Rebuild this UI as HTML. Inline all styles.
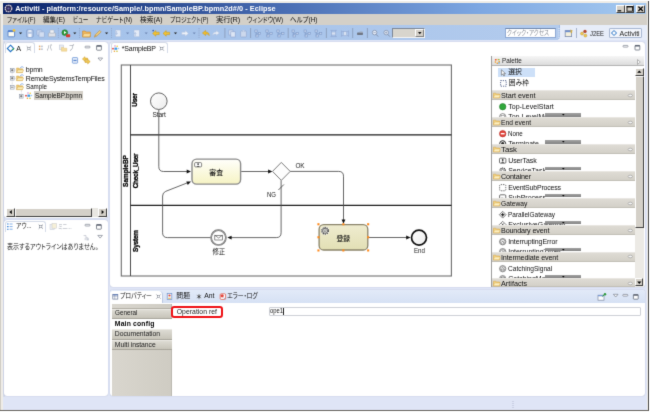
<!DOCTYPE html>
<html lang="ja">
<head>
<meta charset="utf-8">
<title>Activiti - Eclipse</title>
<style>
html,body{margin:0;padding:0;background:#fff}
body{width:650px;height:413px;overflow:hidden;font-family:"Liberation Sans","Noto Sans CJK JP",sans-serif}
#win{position:relative;width:650px;height:413px;overflow:hidden;background:#fff;filter:url(#soft)}
#win div{position:absolute;box-sizing:border-box}
.t{position:absolute;white-space:nowrap;font-feature-settings:"palt"}
svg{position:absolute;overflow:visible}
.panel{background:#fff;border-radius:3px;box-shadow:0 0 1px rgba(120,130,170,.7)}
.drawer{background:linear-gradient(#dedbd4,#d3d0c8);border-top:1px solid #e9e7e2;border-bottom:1px solid #c2bfb6}
.bar{background:linear-gradient(#a2a2a2,#828282)}
.btn3d{background:#d4d0c8;border:1px solid;border-color:#fff #404040 #404040 #fff}

</style>
</head>
<body>
<svg width="0" height="0" style="position:absolute"><defs><filter id="soft" x="0" y="0" width="100%" height="100%" color-interpolation-filters="sRGB"><feConvolveMatrix order="3" kernelMatrix="0.0113 0.0838 0.0113 0.0838 0.6193 0.0838 0.0113 0.0838 0.0113" edgeMode="duplicate" preserveAlpha="true"/></filter></defs></svg>
<div id="win">
<div style="left:0px;top:0.8px;width:648.7px;height:410.4px;background:#efede8;border-right:1.3px solid #4a4a4a;border-bottom:1.2px solid #6a6660"></div>
<div style="left:0px;top:14px;width:1.3px;height:396px;background:#d0ccc4"></div>
<div style="left:2.9px;top:2.9px;width:644.5px;height:407.1px;background:#d4d0c8"></div>
<div style="left:3px;top:3px;width:643px;height:11px;background:linear-gradient(to right,#0a246a 0%,#4a6eb4 44%,#7da7e2 74%,#a6caf0 100%)"></div>
<svg style="left:4px;top:4px" width="9" height="9" viewBox="0 0 9 9"><circle cx="4.5" cy="4.5" r="4.300" fill="#2a2858"/><circle cx="4.500" cy="4.500" r="3.300" fill="none" stroke="#e6e6ee" stroke-width="1.100" stroke-dasharray="1.600 0.500"/><circle cx="4.500" cy="4.500" r="2.400" fill="#34305a"/><circle cx="4.500" cy="4.500" r="1.100" fill="#6a62a8"/></svg>
<span class="t" id="t0" style="left:15.2px;top:3.0px;font-size:7.3px;line-height:11.3px;color:#fff;font-weight:bold;letter-spacing:0.05px;">Activiti - platform:/resource/Sample/.bpmn/SampleBP.bpmn2d#/0 - Eclipse</span>
<div class="btn3d" style="left:615.5px;top:4.5px;width:9px;height:8px;"></div>
<div class="btn3d" style="left:624.5px;top:4.5px;width:9.5px;height:8px;"></div>
<div class="btn3d" style="left:636px;top:4.5px;width:9px;height:8px;"></div>
<svg style="left:615px;top:4px" width="32" height="10" viewBox="0 0 32 10"><rect x="2.6" y="6.2" width="3.6" height="1.2" fill="#000"/><rect x="12" y="2.4" width="5.4" height="4.8" fill="none" stroke="#000" stroke-width="0.8"/><rect x="11.8" y="2.2" width="5.8" height="1.2" fill="#000"/><path d="M23.4 2.6l4.4 4.4M27.8 2.6l-4.4 4.4" stroke="#000" stroke-width="1.3"/></svg>
<span class="t" id="t1" style="left:6.6px;top:13.9px;font-size:7.4px;line-height:11.4px;color:#111;letter-spacing:0.00px;transform-origin:0 50%;transform:scaleX(0.811);">ファイル(F)</span>
<span class="t" id="t2" style="left:43px;top:13.9px;font-size:7.4px;line-height:11.4px;color:#111;letter-spacing:0.00px;transform-origin:0 50%;transform:scaleX(0.893);">編集(E)</span>
<span class="t" id="t3" style="left:72.8px;top:13.9px;font-size:7.4px;line-height:11.4px;color:#111;letter-spacing:0.00px;transform-origin:0 50%;transform:scaleX(0.758);">ビュー</span>
<span class="t" id="t4" style="left:95.5px;top:13.9px;font-size:7.4px;line-height:11.4px;color:#111;letter-spacing:0.00px;transform-origin:0 50%;transform:scaleX(0.814);">ナビゲート(N)</span>
<span class="t" id="t5" style="left:140px;top:13.9px;font-size:7.4px;line-height:11.4px;color:#111;letter-spacing:0.00px;transform-origin:0 50%;transform:scaleX(0.913);">検索(A)</span>
<span class="t" id="t6" style="left:170px;top:13.9px;font-size:7.4px;line-height:11.4px;color:#111;letter-spacing:0.00px;transform-origin:0 50%;transform:scaleX(0.778);">プロジェクト(P)</span>
<span class="t" id="t7" style="left:216px;top:13.9px;font-size:7.4px;line-height:11.4px;color:#111;letter-spacing:-0.21px;">実行(R)</span>
<span class="t" id="t8" style="left:247px;top:13.9px;font-size:7.4px;line-height:11.4px;color:#111;letter-spacing:0.00px;transform-origin:0 50%;transform:scaleX(0.831);">ウィンドウ(W)</span>
<span class="t" id="t9" style="left:289.5px;top:13.9px;font-size:7.4px;line-height:11.4px;color:#111;letter-spacing:0.00px;transform-origin:0 50%;transform:scaleX(0.874);">ヘルプ(H)</span>
<div style="left:2.9px;top:25px;width:644.5px;height:15.4px;background:#e7edf9"></div>
<div style="left:2.9px;top:25px;width:557.3px;height:15.4px;background:linear-gradient(to right,#a4c2ea 0%,#a9c5eb 50%,#b3cbed 100%);border-right:1px solid #9db9e2;border-radius:0 0 4px 0"></div>
<svg style="left:0;top:25px" width="650" height="16" viewBox="0 25 650 16"><rect x="8" y="30.6" width="6.6" height="6.2" rx="0.8" fill="#fdfdf4" stroke="#5c83c4" stroke-width="0.9"/><rect x="8" y="30.4" width="6.6" height="1.7" fill="#4f7fd0"/><circle cx="14" cy="30.4" r="1.4" fill="#f2c43c"/><path d="M19 32.4h3.2l-1.6 1.9z" fill="#222"/><rect x="26.6" y="30" width="6.6" height="7" rx="0.6" fill="#b4c7e6" stroke="#7f9ac8" stroke-width="0.8"/><rect x="28.3" y="33.8" width="3.2" height="3.2" fill="#f3f6fb"/><rect x="28.3" y="30" width="3.2" height="2" fill="#e2eaf6"/><rect x="36.8" y="30" width="5" height="5.2" rx="0.6" fill="#c9d7ee" stroke="#93abd2" stroke-width="0.7"/><rect x="39" y="31.8" width="5.4" height="5.4" rx="0.6" fill="#d3def1" stroke="#93abd2" stroke-width="0.7"/><rect x="48.4" y="32.8" width="7.2" height="4" rx="0.9" fill="#e0e2e8" stroke="#a3aebf" stroke-width="0.7"/><rect x="50" y="30" width="4" height="3" fill="#f0f1f5" stroke="#a9b3c4" stroke-width="0.5"/><path d="M58.4 28v10" stroke="#8ea3c6" stroke-width="0.9" stroke-dasharray="0.9 0.9"/><circle cx="64.8" cy="32.6" r="2.9" fill="#2e9b3a" stroke="#1f6e2a" stroke-width="0.5"/><path d="M64 31.1l2.4 1.5-2.4 1.5z" fill="#fff"/><rect x="66" y="34.2" width="4.2" height="3" rx="0.8" fill="#d83a2e"/><path d="M73.2 32.4h3.2l-1.6 1.9z" fill="#222"/><path d="M79.5 28v10" stroke="#8ea3c6" stroke-width="0.9" stroke-dasharray="0.9 0.9"/><path d="M82.6 31h2.6l.9 1h4.2v5h-7.7z" fill="#f0b65a" stroke="#c98a2e" stroke-width="0.6"/><path d="M83.8 33.6h7l-1.2 3.2h-7z" fill="#f9dc98" stroke="#c98a2e" stroke-width="0.4"/><path d="M94.2 37.2l1.1-2.6 4.4-4.2 1.5 1.5-4.4 4.2z" fill="#ecc878" stroke="#b08a48" stroke-width="0.5"/><path d="M94.2 37.2l1.1-2.6 1.5 1.5z" fill="#c8a060"/><path d="M105 32.4h3.2l-1.6 1.9z" fill="#222"/><path d="M111.5 28v10" stroke="#8ea3c6" stroke-width="0.9" stroke-dasharray="0.9 0.9"/><rect x="115.4" y="30" width="5.4" height="6.8" fill="#e4ebf7" stroke="#a9bcdc" stroke-width="0.5"/><path d="M116.6 31v3.4M116.6 34.4l-1-1.2M116.6 34.4l1-1.2" stroke="#9ab0d6" stroke-width="0.6"/><path d="M126 32.4h3.2l-1.6 1.9z" fill="#6f87b3"/><rect x="134" y="30" width="5.4" height="6.8" fill="#e4ebf7" stroke="#a9bcdc" stroke-width="0.5"/><path d="M135.2 36v-3.4M135.2 32.6l-1 1.2M135.2 32.6l1 1.2" stroke="#9ab0d6" stroke-width="0.6"/><path d="M144.6 32.4h3.2l-1.6 1.9z" fill="#6f87b3"/><path d="M152.6 33.4l3.2-2.8v1.6h3.4v2.4h-3.4v1.6z" fill="#f2c230" stroke="#c6961a" stroke-width="0.5"/><circle cx="153.2" cy="30.6" r="0.9" fill="#3a62b8"/><path d="M163 33.4l3.2-2.8v1.6h3.4v2.4h-3.4v1.6z" fill="#f2c230" stroke="#c6961a" stroke-width="0.5"/><path d="M173.9 32.4h3.2l-1.6 1.9z" fill="#222"/><path d="M188.4 33.4l-3.2-2.8v1.6h-3.4v2.4h3.4v1.6z" fill="#eef2f9" stroke="#b4c3de" stroke-width="0.5"/><path d="M192.6 32.4h3.2l-1.6 1.9z" fill="#7189b5"/><path d="M199 28v10" stroke="#8ea3c6" stroke-width="0.9" stroke-dasharray="0.9 0.9"/><path d="M202.4 33l3.2-2.6v1.6c2.6 0 3.6 1.2 3.6 3.6-1-1.3-1.8-1.6-3.6-1.5v1.5z" fill="#f0bd2c" stroke="#c6961a" stroke-width="0.5"/><path d="M219.4 33l-3.2-2.6v1.6c-2.6 0-3.6 1.2-3.6 3.6 1-1.3 1.8-1.6 3.6-1.5v1.5z" fill="#e6ecf7" stroke="#b0c0dc" stroke-width="0.5"/><path d="M224.9 28v10" stroke="#8898b4" stroke-width="0.8"/><rect x="228.8" y="30" width="4.2" height="5" fill="#d3deef" stroke="#8fa6cf" stroke-width="0.6"/><rect x="230.8" y="31.8" width="4.4" height="5.2" fill="#dde6f4" stroke="#8fa6cf" stroke-width="0.6"/><rect x="240.6" y="31" width="5.8" height="6" rx="0.6" fill="#ccd8ec" stroke="#8fa6cf" stroke-width="0.6"/><rect x="242.2" y="30.2" width="2.6" height="1.6" fill="#e3eaf6" stroke="#a3b7da" stroke-width="0.4"/><path d="M250.6 28v10" stroke="#8898b4" stroke-width="0.8"/><rect x="254.8" y="30" width="2.4" height="2.2" fill="#c0d0ea" stroke="#7f9ac8" stroke-width="0.6"/><rect x="258.2" y="32.4" width="2.4" height="2.2" fill="#c0d0ea" stroke="#7f9ac8" stroke-width="0.6"/><rect x="255.8" y="34.8" width="2.4" height="2.2" fill="#c0d0ea" stroke="#7f9ac8" stroke-width="0.6"/><path d="M256.0 32.2v3.6M256.0 33.5h2.4" stroke="#7f9ac8" stroke-width="0.6" fill="none"/><rect x="265.8" y="30" width="2.4" height="2.2" fill="#c0d0ea" stroke="#7f9ac8" stroke-width="0.6"/><rect x="269.8" y="32.4" width="2.4" height="2.2" fill="#c0d0ea" stroke="#7f9ac8" stroke-width="0.6"/><rect x="266.8" y="34.8" width="2.4" height="2.2" fill="#c0d0ea" stroke="#7f9ac8" stroke-width="0.6"/><path d="M267.0 32.2v3.6M267.0 33.5h2.9999999999999996" stroke="#7f9ac8" stroke-width="0.6" fill="none"/><rect x="276.8" y="30" width="2.4" height="2.2" fill="#c0d0ea" stroke="#7f9ac8" stroke-width="0.6"/><rect x="281.59999999999997" y="32.4" width="2.4" height="2.2" fill="#c0d0ea" stroke="#7f9ac8" stroke-width="0.6"/><rect x="277.8" y="34.8" width="2.4" height="2.2" fill="#c0d0ea" stroke="#7f9ac8" stroke-width="0.6"/><path d="M278.0 32.2v3.6M278.0 33.5h3.8000000000000003" stroke="#7f9ac8" stroke-width="0.6" fill="none"/><path d="M288.2 28v10" stroke="#8898b4" stroke-width="0.8"/><rect x="292" y="30" width="2.4" height="2.2" fill="#c0d0ea" stroke="#7f9ac8" stroke-width="0.6"/><rect x="296.0" y="32.4" width="2.4" height="2.2" fill="#c0d0ea" stroke="#7f9ac8" stroke-width="0.6"/><rect x="293" y="34.8" width="2.4" height="2.2" fill="#c0d0ea" stroke="#7f9ac8" stroke-width="0.6"/><path d="M293.2 32.2v3.6M293.2 33.5h2.9999999999999996" stroke="#7f9ac8" stroke-width="0.6" fill="none"/><rect x="304" y="30" width="2.4" height="2.2" fill="#c0d0ea" stroke="#7f9ac8" stroke-width="0.6"/><rect x="308.0" y="32.4" width="2.4" height="2.2" fill="#c0d0ea" stroke="#7f9ac8" stroke-width="0.6"/><rect x="305" y="34.8" width="2.4" height="2.2" fill="#c0d0ea" stroke="#7f9ac8" stroke-width="0.6"/><path d="M305.2 32.2v3.6M305.2 33.5h2.9999999999999996" stroke="#7f9ac8" stroke-width="0.6" fill="none"/><rect x="315" y="30" width="2.4" height="2.2" fill="#c0d0ea" stroke="#7f9ac8" stroke-width="0.6"/><rect x="319.4" y="32.4" width="2.4" height="2.2" fill="#c0d0ea" stroke="#7f9ac8" stroke-width="0.6"/><rect x="316" y="34.8" width="2.4" height="2.2" fill="#c0d0ea" stroke="#7f9ac8" stroke-width="0.6"/><path d="M316.2 32.2v3.6M316.2 33.5h3.4" stroke="#7f9ac8" stroke-width="0.6" fill="none"/><path d="M326.4 28v10" stroke="#8898b4" stroke-width="0.8"/><path d="M330.4 30.4h6.4M330.4 36.6h6.4M331.6 30.4v6.2M335.6 30.4v6.2" stroke="#93abd4" stroke-width="0.7" fill="none"/><rect x="331.6" y="32" width="4" height="3" fill="#d7e1f2" stroke="#93abd4" stroke-width="0.5"/><path d="M341.4 30.4v6.4M348.6 30.4v6.4M341.4 31.6h7.2M341.4 35.6h7.2" stroke="#93abd4" stroke-width="0.7" fill="none"/><rect x="343.4" y="31.6" width="3.2" height="4" fill="#d7e1f2" stroke="#93abd4" stroke-width="0.5"/><path d="M352.7 28v10" stroke="#8898b4" stroke-width="0.8"/><rect x="357" y="32.4" width="6" height="2.6" rx="0.8" fill="#6f7684"/><rect x="359.6" y="31.6" width="3" height="1.4" fill="#9aa2b2"/><path d="M367.4 28v10" stroke="#8898b4" stroke-width="0.8"/><circle cx="374.6" cy="32.6" r="2.3" fill="#e6edf8" stroke="#8392ad" stroke-width="0.8"/><path d="M376.2 34.4l2 2.2" stroke="#8392ad" stroke-width="1"/><path d="M373.4 32.6h2.4" stroke="#8392ad" stroke-width="0.6"/><circle cx="386.2" cy="32.6" r="2.3" fill="#e6edf8" stroke="#8392ad" stroke-width="0.8"/><path d="M387.8 34.4l2 2.2" stroke="#8392ad" stroke-width="1"/><path d="M385 32.6h2.4M386.2 31.4v2.4" stroke="#8392ad" stroke-width="0.6"/></svg>
<div style="left:392px;top:28px;width:32.5px;height:10px;background:#d8d5cd;border:1px solid;border-color:#7d8796 #f4f4f4 #f4f4f4 #7d8796"></div>
<div style="left:415px;top:29px;width:8.5px;height:8px;background:#d4d0c8;border:1px solid;border-color:#fff #808080 #808080 #fff"></div>
<svg style="left:417.600px;top:32.200px" width="3.600" height="2.400" viewBox="0 0 3.600 2.400"><path d="M0 0h3.600L1.800 2.200z" fill="#111"/></svg>
<div style="left:504.5px;top:27.7px;width:51px;height:10.5px;background:#fff;border:1px solid #8fa9d4;border-top-color:#6f87ad"></div>
<span class="t" id="t10" style="left:506.6px;top:27.8px;font-size:6.8px;line-height:10.8px;color:#8a8f99;letter-spacing:0.00px;transform-origin:0 50%;transform:scaleX(0.816);">クイック・アクセス</span>
<svg style="left:557.600px;top:27.500px" width="2" height="12" viewBox="0 0 2 12"><path d="M1 0v12" stroke="#eef3fb" stroke-width="1" stroke-dasharray="1 1.200"/></svg>
<svg style="left:564px;top:29px" width="10" height="9" viewBox="0 0 10 9"><rect x="1.2" y="1.6" width="6.4" height="6" fill="#f4f0dc" stroke="#7d8cab" stroke-width="0.8"/><rect x="1.2" y="1.6" width="6.4" height="1.6" fill="#6d8fd0"/><path d="M6.6 0.4l.7 1.2 1.3.2-1 .9.3 1.3-1.3-.6" fill="#f0c030" stroke="#c7982a" stroke-width="0.3"/></svg>
<div style="left:576px;top:28px;width:1px;height:10px;background:#a7b4cc"></div>
<svg style="left:579.6px;top:29px" width="8" height="9" viewBox="0 0 8 9"><circle cx="2" cy="4.6" r="1.5" fill="#f0c850" stroke="#b58a2a" stroke-width="0.4"/><circle cx="5" cy="2.4" r="1.7" fill="#b5482e"/><circle cx="5.4" cy="6.6" r="1.5" fill="#f0c850" stroke="#b58a2a" stroke-width="0.4"/></svg>
<span class="t" id="t11" style="left:590px;top:27.8px;font-size:7px;line-height:11px;color:#222;letter-spacing:0.00px;transform-origin:0 50%;transform:scaleX(0.837);">J2EE</span>
<div style="left:608.6px;top:27.6px;width:33.6px;height:10.8px;background:#f3f6fc;border:1px solid #a9b8d3;border-radius:1px"></div>
<svg style="left:611.4px;top:30.2px" width="6" height="6" viewBox="0 0 6 6"><path d="M3 .5L5.5 3 3 5.5.5 3z" fill="#fff" stroke="#1f6fc4" stroke-width="1"/></svg>
<span class="t" id="t12" style="left:619.6px;top:27.8px;font-size:7px;line-height:11px;color:#222;letter-spacing:-0.03px;">Activiti</span>
<div style="left:2.9px;top:40.3px;width:644.5px;height:369.7px;background:#dfe5f6"></div>
<div style="left:3px;top:40.5px;width:2px;height:356px;background:#d4daea"></div>
<div class="panel" style="left:4px;top:41.8px;width:103.6px;height:176.6px;"></div>
<div style="left:4.6px;top:42.4px;width:30px;height:10.6px;background:#fff;border:1px solid #d5dbe8;border-bottom:0;border-radius:3px 3px 0 0"></div>
<svg style="left:0;top:41px" width="110" height="26" viewBox="0 41 110 26"><path d="M10.5 45.2l3.2 3.2-3.2 3.2-3.2-3.2z" fill="#fff" stroke="#1f6fc4" stroke-width="1.1"/><path d="M12.4 50l1.6-1.6" stroke="#3aa648" stroke-width="1.1"/><path d="M26.7 46.3l4.4 4.4m0-4.4l-4.4 4.4" stroke="#6c7381" stroke-width="0.55"/><rect x="27.8" y="47.4" width="2.2" height="2.2" fill="#fff" stroke="#6c7381" stroke-width="0.45"/><rect x="38.9" y="45.6" width="1.5" height="1.6" fill="#e6a868"/><rect x="38.9" y="48.4" width="1.5" height="1.6" fill="#e6a868"/><rect x="41.2" y="45.6" width="1.5" height="1.6" fill="#b4bccc"/><rect x="41.2" y="48.4" width="1.5" height="1.6" fill="#b4bccc"/><rect x="59.4" y="45" width="4.2" height="4.6" fill="#e8ecf4" stroke="#bcc4d2" stroke-width="0.5"/><path d="M61.4 47.4h2.2l.6.8h2.6v3h-5.4z" fill="#f5dc9c" stroke="#dcbc70" stroke-width="0.4"/><rect x="85" y="46.2" width="5" height="1.7" rx="0.7" fill="#fff" stroke="#666d7c" stroke-width="0.6"/><rect x="96.6" y="45.6" width="4.8" height="4.6" rx="0.6" fill="#fff" stroke="#555c6a" stroke-width="0.7"/><rect x="96.6" y="45.4" width="4.8" height="1.3" fill="#555c6a"/><rect x="72.400" y="57.600" width="5.200" height="5.600" rx="0.600" fill="#eaf1fc" stroke="#6f97d6" stroke-width="0.800"/><rect x="73.400" y="59.800" width="3.200" height="1.300" fill="#5a86cc"/><path d="M82.400 59l2.500-2.300v1.400h2.700v1.800h-2.700v1.400z" fill="#f4cc50" stroke="#c8962a" stroke-width="0.500"/><path d="M90.200 61.600l-2.500 2.300v-1.400h-2.700v-1.800h2.700v-1.400z" fill="#f4cc50" stroke="#c8962a" stroke-width="0.500"/><path d="M98 58h4.6l-2.3 2.7z" fill="#fff" stroke="#666d7c" stroke-width="0.6"/></svg>
<span class="t" id="t13" style="left:16.2px;top:43.0px;font-size:7.2px;line-height:11.2px;color:#111;letter-spacing:-0.20px;">A</span>
<span class="t" id="t14" style="left:46.6px;top:43.3px;font-size:6.6px;line-height:10.6px;color:#8b919d;letter-spacing:0.00px;transform-origin:0 50%;transform:scaleX(0.804);">パ</span>
<span class="t" id="t15" style="left:69.4px;top:43.3px;font-size:6.6px;line-height:10.6px;color:#8b919d;letter-spacing:0.00px;transform-origin:0 50%;transform:scaleX(0.823);">プ</span>
<svg style="left:11px;top:70px" width="12" height="30" viewBox="11 70 12 30"><path d="M12.2 72v16M14 70h2M14 78.3h2M14 86.8h2M21.4 90v5.4" stroke="#a8adb8" stroke-width="0.5" stroke-dasharray="0.7 0.7" fill="none"/></svg>
<svg style="left:10px;top:67.9px" width="4.4" height="4.4" viewBox="0 0 4.4 4.4"><rect x="0.3" y="0.3" width="3.8" height="3.8" fill="#fff" stroke="#8c96a8" stroke-width="0.6"/><path d="M1 2.2h2.4" stroke="#333" stroke-width="0.6"/><path d="M2.2 1v2.4" stroke="#333" stroke-width="0.6"/></svg>
<svg style="left:16px;top:65.7px" width="8" height="7.4" viewBox="0 0 8 7.4"><path d="M.6 2h2.2l.7.8h3v3.800H.6z" fill="#eecb78" stroke="#cfa044" stroke-width="0.45"/><path d="M1.900 3.900h5.800l-1.200 2.700H.6z" fill="#fbeeb8" stroke="#cfa044" stroke-width="0.4"/><path d="M4.200 2.300c.4-1.600 2.400-2 3.400-.8" fill="none" stroke="#7ea6e2" stroke-width="0.9"/></svg>
<span class="t" id="t16" style="left:25.8px;top:64.4px;font-size:7px;line-height:11px;color:#111;letter-spacing:-0.20px;">bpmn</span>
<svg style="left:10px;top:76.4px" width="4.4" height="4.4" viewBox="0 0 4.4 4.4"><rect x="0.3" y="0.3" width="3.8" height="3.8" fill="#fff" stroke="#8c96a8" stroke-width="0.6"/><path d="M1 2.2h2.4" stroke="#333" stroke-width="0.6"/><path d="M2.2 1v2.4" stroke="#333" stroke-width="0.6"/></svg>
<svg style="left:16px;top:74.2px" width="8" height="7.4" viewBox="0 0 8 7.4"><path d="M.6 2h2.2l.7.8h3v3.800H.6z" fill="#eecb78" stroke="#cfa044" stroke-width="0.45"/><path d="M1.900 3.900h5.800l-1.200 2.700H.6z" fill="#fbeeb8" stroke="#cfa044" stroke-width="0.4"/><path d="M4.200 2.300c.4-1.600 2.400-2 3.400-.8" fill="none" stroke="#7ea6e2" stroke-width="0.9"/></svg>
<span class="t" id="t17" style="left:25.8px;top:72.9px;font-size:7px;line-height:11px;color:#111;letter-spacing:-0.21px;">RemoteSystemsTempFiles</span>
<svg style="left:10px;top:84.9px" width="4.4" height="4.4" viewBox="0 0 4.4 4.4"><rect x="0.3" y="0.3" width="3.8" height="3.8" fill="#fff" stroke="#8c96a8" stroke-width="0.6"/><path d="M1 2.2h2.4" stroke="#333" stroke-width="0.6"/></svg>
<svg style="left:16px;top:82.7px" width="8" height="7.4" viewBox="0 0 8 7.4"><path d="M.6 2h2.2l.7.8h3v3.800H.6z" fill="#eecb78" stroke="#cfa044" stroke-width="0.45"/><path d="M1.900 3.900h5.800l-1.200 2.700H.6z" fill="#fbeeb8" stroke="#cfa044" stroke-width="0.4"/><path d="M4.200 2.300c.4-1.600 2.400-2 3.400-.8" fill="none" stroke="#7ea6e2" stroke-width="0.9"/></svg>
<span class="t" id="t18" style="left:25.8px;top:81.4px;font-size:7px;line-height:11px;color:#111;letter-spacing:0.00px;transform-origin:0 50%;transform:scaleX(0.885);">Sample</span>
<div style="left:33.6px;top:91.4px;width:49.2px;height:8.4px;background:#d4d0c8"></div>
<svg style="left:19.4px;top:93.5px" width="4.4" height="4.4" viewBox="0 0 4.4 4.4"><rect x="0.3" y="0.3" width="3.8" height="3.8" fill="#fff" stroke="#8c96a8" stroke-width="0.6"/><path d="M1 2.2h2.4" stroke="#333" stroke-width="0.6"/><path d="M2.2 1v2.4" stroke="#333" stroke-width="0.6"/></svg>
<svg style="left:24.6px;top:91.6px" width="7.4" height="7.4" viewBox="0 0 7.4 7.4"><rect x="2.4" y="2.6" width="2.8" height="2.2" fill="#3d9be8"/><circle cx="1" cy="3.7" r=".9" fill="#e8403a"/><circle cx="3" cy="1" r=".8" fill="#d48ad0"/><circle cx="5.2" cy="1.2" r=".8" fill="#f0d030"/><circle cx="6.5" cy="3.5" r=".8" fill="#a0c8f0"/><circle cx="2.4" cy="6.3" r=".8" fill="#f0a030"/><circle cx="5" cy="6.3" r=".8" fill="#c8c030"/></svg>
<span class="t" id="t19" style="left:34.8px;top:90.0px;font-size:7px;line-height:11px;color:#111;letter-spacing:0.00px;transform-origin:0 50%;transform:scaleX(0.910);">SampleBP.bpmn</span>
<div style="left:6.3px;top:207.6px;width:100.7px;height:9px;background:#e9e7e2"></div>
<div class="btn3d" style="left:6.3px;top:207.6px;width:8.7px;height:9px;"></div>
<div class="btn3d" style="left:98.4px;top:207.6px;width:8.6px;height:9px;"></div>
<div class="btn3d" style="left:15px;top:207.6px;width:77px;height:9px;"></div>
<svg style="left:6px;top:207px" width="102" height="10" viewBox="6 207 102 10"><path d="M11.8 210v4.2l-2.4-2.1z" fill="#000"/><path d="M101.6 210v4.2l2.4-2.1z" fill="#000"/></svg>
<div class="panel" style="left:4px;top:220.4px;width:103.6px;height:176px;"></div>
<div style="left:4.6px;top:221px;width:41px;height:10.6px;background:#fff;border:1px solid #d5dbe8;border-bottom:0;border-radius:3px 3px 0 0"></div>
<svg style="left:0;top:220px" width="110" height="24" viewBox="0 220 110 24"><path d="M7 224h1.600M7 226.600h1.600M7 229.200h1.600" stroke="#3f86d8" stroke-width="1.100"/><path d="M9.600 224h3M9.600 226.600h3M9.600 229.200h3" stroke="#78a8e4" stroke-width="0.900"/><path d="M38.6 224.5l4.4 4.4m0-4.4l-4.4 4.4" stroke="#6c7381" stroke-width="0.55"/><rect x="39.7" y="225.6" width="2.2" height="2.2" fill="#fff" stroke="#6c7381" stroke-width="0.45"/><rect x="50" y="224.600" width="4.400" height="5" fill="#eef0f4" stroke="#c2c8d4" stroke-width="0.500"/><rect x="52" y="223.600" width="4.400" height="4.600" fill="#f6f0d8" stroke="#c8c8c8" stroke-width="0.500"/><rect x="85" y="224.3" width="5" height="1.7" rx="0.7" fill="#fff" stroke="#666d7c" stroke-width="0.6"/><rect x="96.5" y="224.6" width="4.8" height="4.6" rx="0.6" fill="#fff" stroke="#555c6a" stroke-width="0.7"/><rect x="96.5" y="224.4" width="4.8" height="1.3" fill="#555c6a"/><path d="M83.600 235.600h2.400v2.200h2.200M85.200 237.800v2.400" stroke="#b7bcc8" stroke-width="0.700" fill="none"/><rect x="86.400" y="238.200" width="2.400" height="2.200" fill="#c8ccd6"/><path d="M97.8 235.4h4.6l-2.3 2.7z" fill="#fff" stroke="#666d7c" stroke-width="0.6"/></svg>
<span class="t" id="t20" style="left:16px;top:221.4px;font-size:6.8px;line-height:10.8px;color:#222;letter-spacing:0.00px;transform-origin:0 50%;transform:scaleX(0.850);">アウ...</span>
<span class="t" id="t21" style="left:58.4px;top:221.5px;font-size:6.6px;line-height:10.6px;color:#a3a8b3;letter-spacing:0.00px;transform-origin:0 50%;transform:scaleX(0.799);">ミニ...</span>
<span class="t" id="t22" style="left:6.8px;top:242.4px;font-size:6.8px;line-height:10.8px;color:#1a1a1a;letter-spacing:0.00px;transform-origin:0 50%;transform:scaleX(0.889);">表示するアウトラインはありません。</span>
<div class="panel" style="left:109.8px;top:42px;width:535px;height:245.4px;"></div>
<div style="left:110.6px;top:42.3px;width:57px;height:11px;background:#fff;border:1px solid #d5dbe8;border-bottom:0;border-radius:3px 3px 0 0"></div>
<svg style="left:111.8px;top:45px" width="7.4" height="7.4" viewBox="0 0 7.4 7.4"><rect x="2.4" y="2.6" width="2.8" height="2.2" fill="#3d9be8"/><circle cx="1" cy="3.7" r=".9" fill="#e8403a"/><circle cx="3" cy="1" r=".8" fill="#d48ad0"/><circle cx="5.2" cy="1.2" r=".8" fill="#f0d030"/><circle cx="6.5" cy="3.5" r=".8" fill="#a0c8f0"/><circle cx="2.4" cy="6.3" r=".8" fill="#f0a030"/><circle cx="5" cy="6.3" r=".8" fill="#c8c030"/></svg>
<span class="t" id="t23" style="left:121.8px;top:43.2px;font-size:7px;line-height:11px;color:#111;letter-spacing:-0.20px;">*SampleBP</span>
<svg style="left:0;top:41px" width="650" height="14" viewBox="0 41 650 14"><path d="M159.6 46.4l4.4 4.4m0-4.4l-4.4 4.4" stroke="#6c7381" stroke-width="0.55"/><rect x="160.7" y="47.5" width="2.2" height="2.2" fill="#fff" stroke="#6c7381" stroke-width="0.45"/><rect x="623" y="45.4" width="5" height="1.7" rx="0.7" fill="#fff" stroke="#666d7c" stroke-width="0.6"/><rect x="635" y="45.4" width="4.8" height="4.6" rx="0.6" fill="#fff" stroke="#555c6a" stroke-width="0.7"/><rect x="635" y="45.199999999999996" width="4.8" height="1.3" fill="#555c6a"/></svg>
<svg style="left:0;top:0" width="650" height="413" viewBox="0 0 650 413" font-family='"Liberation Sans","Noto Sans CJK JP",sans-serif'>
<defs>
<linearGradient id="gT" x1="0" y1="0" x2="0" y2="1"><stop offset="0" stop-color="#fffffb"/><stop offset="1" stop-color="#f6f3c4"/></linearGradient>
<linearGradient id="gS" x1="0" y1="0" x2="0" y2="1"><stop offset="0" stop-color="#efecd0"/><stop offset="1" stop-color="#e2dfb4"/></linearGradient>
<linearGradient id="gE" x1="0" y1="0" x2="1" y2="1"><stop offset="0" stop-color="#ffffff"/><stop offset="1" stop-color="#ececec"/></linearGradient>
</defs>
<!-- pool -->
<rect x="121.3" y="65" width="330.1" height="211" fill="#fff" stroke="#6e6e6e" stroke-width="1.1"/>
<path d="M130.5 65v211" stroke="#4a4a4a" stroke-width="1"/>
<path d="M130.5 134.8h320.9M130.5 205.3h320.9" stroke="#1c1c1c" stroke-width="1.3"/>
<!-- flows -->
<g fill="none" stroke="#4c4c4c" stroke-width="0.85">
<path d="M158.8 109.8V166.7q0 4.8 4.8 4.8H188"/>
<path d="M241.2 171.5h28"/>
<path d="M290.1 171.4H338.7q4.8 0 4.8 4.8V221"/>
<path d="M281.1 180.4V232.8q0 4.8-4.800 4.800H230"/>
<path d="M278.4 190.000l5.5-5.5"/>
<path d="M210.500 237.6H167.400q-4.800 0-4.800-4.800V196q0-3.400 3.200-4.700L188 182.600"/>
<path d="M368.500 237.500H407.500"/>
</g>
<g fill="#111">
<path d="M191 171.5l-4.300-1.900v3.800z"/>
<path d="M272.400 171.500l-4.300-1.900v3.800z"/>
<path d="M343.500 223.700l-1.900-4.300h3.800z"/>
<path d="M227.300 237.600l4.300-1.900v3.800z"/>
<path d="M191 181.400l-4.700.1 1.500 3.500z"/>
<path d="M410.500 237.500l-4.300-1.900v3.800z"/>
</g>
<!-- start -->
<circle cx="158.800" cy="101.200" r="8.300" fill="url(#gE)" stroke="#555" stroke-width="0.9"/>
<!-- task 1 -->
<rect x="192" y="159.100" width="48.600" height="25" rx="4.600" fill="url(#gT)" stroke="#8a8a8a" stroke-width="1.4"/>
<rect x="194.600" y="162.600" width="7" height="4.300" rx="1" fill="#fff" stroke="#333" stroke-width="0.6"/><circle cx="198.100" cy="164.100" r="0.900" fill="#333"/><path d="M196.600 166.700q1.500-2.100 3 0z" fill="#333"/>
<!-- gateway -->
<path d="M281.300 162.400l8.900 9-8.900 9-8.800-9z" fill="#fdfdfd" stroke="#6e6e6e" stroke-width="0.9"/>
<!-- mail event -->
<circle cx="218.500" cy="237.600" r="7.400" fill="#fff" stroke="#6a6a6a" stroke-width="1.700"/>
<circle cx="218.500" cy="237.600" r="7.400" fill="none" stroke="#fff" stroke-width="0.300"/>
<rect x="214.800" y="235.300" width="7.600" height="4.700" fill="#fff" stroke="#444" stroke-width="0.600"/><path d="M214.800 235.300l3.800 2.700 3.800-2.700" fill="none" stroke="#444" stroke-width="0.600"/>
<!-- task 2 (selected) -->
<rect x="319.100" y="224.600" width="48.700" height="25.400" rx="4.600" fill="url(#gS)" stroke="#8a846a" stroke-width="1.300"/>
<g fill="#ff8a1c">
<rect x="317.400" y="223.200" width="2.100" height="2.100"/><rect x="342.300" y="223.200" width="2.100" height="2.100"/><rect x="367.100" y="223.200" width="2.100" height="2.100"/>
<rect x="317.400" y="236.200" width="2.100" height="2.100"/><rect x="367.100" y="236.200" width="2.100" height="2.100"/>
<rect x="317.400" y="249.400" width="2.100" height="2.100"/><rect x="342.300" y="249.400" width="2.100" height="2.100"/><rect x="367.100" y="249.400" width="2.100" height="2.100"/>
</g>
<circle cx="325.100" cy="230.800" r="4.100" fill="#fdfdf8"/>
<circle cx="325.100" cy="230.800" r="3.300" fill="none" stroke="#4a4a4a" stroke-width="1.300" stroke-dasharray="1.300 0.780"/><circle cx="325.100" cy="230.800" r="2.500" fill="#fdfdf8" stroke="#4a4a4a" stroke-width="0.800"/><circle cx="325.100" cy="230.800" r="1.100" fill="none" stroke="#4a4a4a" stroke-width="0.600"/>
<!-- end -->
<circle cx="419" cy="237.600" r="7.500" fill="url(#gE)" stroke="#111" stroke-width="1.700"/>
</svg>
<span class="t" id="t24" style="left:152.6px;top:109.7px;font-size:6.6px;line-height:10.6px;color:#222;letter-spacing:-0.15px;">Start</span>
<span class="t" id="t25" style="left:209.2px;top:168.0px;font-size:6.8px;line-height:10.8px;color:#111;letter-spacing:0.15px;font-weight:500;">審査</span>
<span class="t" id="t26" style="left:295.4px;top:160.8px;font-size:6.4px;line-height:10.4px;color:#222;letter-spacing:-0.22px;">OK</span>
<span class="t" id="t27" style="left:267px;top:190.4px;font-size:6.4px;line-height:10.4px;color:#222;letter-spacing:0.00px;transform-origin:0 50%;transform:scaleX(0.938);">NG</span>
<span class="t" id="t28" style="left:212.4px;top:246.5px;font-size:6.4px;line-height:10.4px;color:#222;letter-spacing:0.01px;">修正</span>
<span class="t" id="t29" style="left:336.5px;top:233.6px;font-size:6.8px;line-height:10.8px;color:#111;letter-spacing:-0.05px;font-weight:500;">登録</span>
<span class="t" id="t30" style="left:413.7px;top:246.2px;font-size:6.6px;line-height:10.6px;color:#222;letter-spacing:0.00px;transform-origin:0 50%;transform:scaleX(0.937);">End</span>
<span class="t" id="t31" style="left:126px;top:171.2px;font-size:6.5px;line-height:10.5px;color:#000;font-weight:bold;letter-spacing:-0.05px;transform:translate(-50%,-50%) rotate(-90deg);-webkit-text-stroke:0.3px #000;">SampleBP</span>
<span class="t" id="t32" style="left:135.4px;top:99.6px;font-size:6.5px;line-height:10.5px;color:#000;font-weight:bold;letter-spacing:-0.20px;transform:translate(-50%,-50%) rotate(-90deg);-webkit-text-stroke:0.3px #000;">User</span>
<span class="t" id="t33" style="left:135.6px;top:170.5px;font-size:6.5px;line-height:10.5px;color:#000;font-weight:bold;letter-spacing:-0.30px;transform:translate(-50%,-50%) rotate(-90deg);-webkit-text-stroke:0.3px #000;">Check_User</span>
<span class="t" id="t34" style="left:135.6px;top:240.8px;font-size:6.5px;line-height:10.5px;color:#000;font-weight:bold;letter-spacing:-0.23px;transform:translate(-50%,-50%) rotate(-90deg);-webkit-text-stroke:0.3px #000;">System</span>
<div style="left:490.8px;top:55.6px;width:152.8px;height:231.8px;background:#fff;border-left:1px solid #9c9c9c"></div>
<div style="left:491.6px;top:56.3px;width:152px;height:9.4px;background:linear-gradient(#f6f6f6,#dcdcdc);border-bottom:1px solid #b4b4b4"></div>
<svg style="left:494px;top:58px" width="7" height="7" viewBox="0 0 7 7"><circle cx="3.3" cy="3.3" r="2" fill="none" stroke="#f0a030" stroke-width="1.4" stroke-dasharray="1.2 1"/><circle cx="1.6" cy="1.8" r=".8" fill="#e85040"/><circle cx="5" cy="5" r=".8" fill="#50a0e8"/><circle cx="5" cy="1.6" r=".7" fill="#60c050"/></svg>
<span class="t" id="t35" style="left:502.2px;top:55.8px;font-size:6.8px;line-height:10.8px;color:#222;letter-spacing:0.00px;transform-origin:0 50%;transform:scaleX(0.935);">Palette</span>
<svg style="left:636.6px;top:58.6px" width="4" height="6" viewBox="0 0 4 6"><path d="M.5.6l2.8 2.4L.5 5.4z" fill="#fff" stroke="#8a8a8a" stroke-width="0.6"/></svg>
<div style="left:635px;top:67.6px;width:8.6px;height:219.6px;background:#eceae5"></div>
<div class="btn3d" style="left:635px;top:67.6px;width:8.6px;height:8px;"></div>
<div class="btn3d" style="left:635px;top:75.6px;width:8.6px;height:152px;"></div>
<div class="btn3d" style="left:635.3px;top:278px;width:8px;height:8.4px;"></div>
<svg style="left:635px;top:67px" width="9" height="221" viewBox="635 67 9 221"><path d="M637.2 72.8h4.2l-2.1-2.4z" fill="#000"/><path d="M637.2 281.6h4.2l-2.1 2.4z" fill="#000"/></svg>
<div style="left:498.3px;top:68px;width:36.3px;height:8.6px;background:#cde0f8"></div>
<svg style="left:499.6px;top:69px" width="7" height="8" viewBox="0 0 7 8"><path d="M1.4.8v5.4l1.4-1.2 1 2 .9-.4-1-2h1.8z" fill="#fff" stroke="#444" stroke-width="0.5"/></svg>
<span class="t" id="t36" style="left:508.2px;top:67.0px;font-size:6.8px;line-height:10.8px;color:#111;letter-spacing:-0.05px;">選択</span>
<svg style="left:499.6px;top:80.2px" width="7" height="7" viewBox="0 0 7 7"><rect x=".6" y=".6" width="5.6" height="5.6" fill="none" stroke="#3a4a78" stroke-width="0.8" stroke-dasharray="1.2 1"/></svg>
<span class="t" id="t37" style="left:508.8px;top:78.4px;font-size:6.8px;line-height:10.8px;color:#111;letter-spacing:-0.02px;">囲み枠</span>
<div class="drawer" style="left:491.6px;top:90.4px;width:143.4px;height:10px;"></div>
<svg style="left:492.8px;top:92.0px" width="7.4" height="6.4" viewBox="0 0 7.4 6.4"><path d="M.5 1.200h2.200l.7.800h3.200v3.800H.5z" fill="#f3d486" stroke="#d8a43c" stroke-width="0.500"/><path d="M1.500 3h5.700l-.900 2.800H.5z" fill="#fcefc0" stroke="#d8a43c" stroke-width="0.400"/></svg>
<span class="t" id="t38" style="left:501px;top:90.2px;font-size:7.2px;line-height:11.2px;color:#111;letter-spacing:-0.03px;">Start event</span>
<svg style="left:627.6px;top:93.80000000000001px" width="4.6" height="3" viewBox="0 0 4.6 3"><ellipse cx="2.3" cy="1.5" rx="2.2" ry="1.300" fill="#f4f4f4" stroke="#8f8f8f" stroke-width="0.55"/></svg>
<svg style="left:499.3px;top:102.9px" width="7.4" height="7.4" viewBox="0 0 7.4 7.4"><circle cx="3.7" cy="3.7" r="3.2" fill="#2fa83a" stroke="#2a7a30" stroke-width="0.6"/></svg>
<span class="t" id="t39" style="left:508.2px;top:101.1px;font-size:7px;line-height:11px;color:#111;letter-spacing:0.03px;">Top-LevelStart</span>
<div style="left:491.8px;top:112.8px;width:143px;height:4.3px;overflow:hidden"><svg style="left:7.5px;top:.4px" width="7.4" height="7.4" viewBox="0 0 7.4 7.4"><circle cx="3.7" cy="3.7" r="3.1" fill="#fff" stroke="#444" stroke-width="0.6"/><rect x="2" y="2.6" width="3.4" height="2.2" fill="none" stroke="#444" stroke-width="0.4"/></svg><span class="t" style="left:16.4px;top:-1.4px;font-size:7px;line-height:11px;color:#111">Top-LevelMessage</span></div>
<div class="bar" style="left:545px;top:113.4px;width:35.8px;height:3.3px;"></div>
<svg style="left:561.6px;top:114.2px" width="2.6" height="1.8" viewBox="0 0 2.6 1.8"><path d="M0 0h2.6L1.3 1.6z" fill="#000"/></svg>
<div class="drawer" style="left:491.6px;top:117.3px;width:143.4px;height:10px;"></div>
<svg style="left:492.8px;top:118.89999999999999px" width="7.4" height="6.4" viewBox="0 0 7.4 6.4"><path d="M.5 1.200h2.200l.7.800h3.200v3.800H.5z" fill="#f3d486" stroke="#d8a43c" stroke-width="0.500"/><path d="M1.500 3h5.700l-.900 2.800H.5z" fill="#fcefc0" stroke="#d8a43c" stroke-width="0.400"/></svg>
<span class="t" id="t40" style="left:501px;top:117.1px;font-size:7.2px;line-height:11.2px;color:#111;letter-spacing:0.00px;transform-origin:0 50%;transform:scaleX(0.927);">End event</span>
<svg style="left:627.6px;top:120.7px" width="4.6" height="3" viewBox="0 0 4.6 3"><ellipse cx="2.3" cy="1.5" rx="2.2" ry="1.300" fill="#f4f4f4" stroke="#8f8f8f" stroke-width="0.55"/></svg>
<svg style="left:499.3px;top:129.8px" width="7.4" height="7.4" viewBox="0 0 7.4 7.4"><circle cx="3.7" cy="3.7" r="3.2" fill="#e2453c" stroke="#b12a24" stroke-width="0.6"/><rect x="1.8" y="3" width="3.8" height="1.4" fill="#fff"/></svg>
<span class="t" id="t41" style="left:508.2px;top:128.0px;font-size:7px;line-height:11px;color:#111;letter-spacing:0.00px;transform-origin:0 50%;transform:scaleX(0.884);">None</span>
<div style="left:491.8px;top:139.7px;width:143px;height:4.3px;overflow:hidden"><svg style="left:7.5px;top:.4px" width="7.4" height="7.4" viewBox="0 0 7.4 7.4"><circle cx="3.7" cy="3.7" r="3" fill="#fff" stroke="#222" stroke-width="1"/><circle cx="3.7" cy="3.7" r="1.6" fill="#222"/></svg><span class="t" style="left:16.4px;top:-1.4px;font-size:7px;line-height:11px;color:#111">Terminate</span></div>
<div class="bar" style="left:545px;top:140.3px;width:35.8px;height:3.3px;"></div>
<svg style="left:561.6px;top:141.1px" width="2.6" height="1.8" viewBox="0 0 2.6 1.8"><path d="M0 0h2.6L1.3 1.6z" fill="#000"/></svg>
<div class="drawer" style="left:491.6px;top:144.2px;width:143.4px;height:10px;"></div>
<svg style="left:492.8px;top:145.79999999999998px" width="7.4" height="6.4" viewBox="0 0 7.4 6.4"><path d="M.5 1.200h2.200l.7.800h3.200v3.800H.5z" fill="#f3d486" stroke="#d8a43c" stroke-width="0.500"/><path d="M1.500 3h5.700l-.900 2.800H.5z" fill="#fcefc0" stroke="#d8a43c" stroke-width="0.400"/></svg>
<span class="t" id="t42" style="left:501px;top:144.0px;font-size:7.2px;line-height:11.2px;color:#111;letter-spacing:0.00px;transform-origin:0 50%;transform:scaleX(1.082);">Task</span>
<svg style="left:627.6px;top:147.6px" width="4.6" height="3" viewBox="0 0 4.6 3"><ellipse cx="2.3" cy="1.5" rx="2.2" ry="1.300" fill="#f4f4f4" stroke="#8f8f8f" stroke-width="0.55"/></svg>
<svg style="left:499.3px;top:156.7px" width="7.4" height="7.4" viewBox="0 0 7.4 7.4"><rect x=".5" y="1.2" width="6.4" height="5" rx="1" fill="#fff" stroke="#333" stroke-width="0.7"/><circle cx="3.7" cy="3" r=".9" fill="#333"/><path d="M2.2 5.8q1.5-2.4 3 0z" fill="#333"/></svg>
<span class="t" id="t43" style="left:508.2px;top:154.9px;font-size:7px;line-height:11px;color:#111;letter-spacing:-0.10px;">UserTask</span>
<div style="left:491.8px;top:166.6px;width:143px;height:4.3px;overflow:hidden"><svg style="left:7.5px;top:.4px" width="7.4" height="7.4" viewBox="0 0 7.4 7.4"><circle cx="3.7" cy="3.7" r="2.6" fill="none" stroke="#333" stroke-width="1.4" stroke-dasharray="1 .63"/><circle cx="3.7" cy="3.7" r="1.2" fill="#fff" stroke="#333" stroke-width="0.5"/></svg><span class="t" style="left:16.4px;top:-1.4px;font-size:7px;line-height:11px;color:#111">ServiceTask</span></div>
<div class="bar" style="left:545px;top:167.2px;width:35.8px;height:3.3px;"></div>
<svg style="left:561.6px;top:168.0px" width="2.6" height="1.8" viewBox="0 0 2.6 1.8"><path d="M0 0h2.6L1.3 1.6z" fill="#000"/></svg>
<div class="drawer" style="left:491.6px;top:171.2px;width:143.4px;height:10px;"></div>
<svg style="left:492.8px;top:172.79999999999998px" width="7.4" height="6.4" viewBox="0 0 7.4 6.4"><path d="M.5 1.200h2.200l.7.800h3.200v3.800H.5z" fill="#f3d486" stroke="#d8a43c" stroke-width="0.500"/><path d="M1.500 3h5.700l-.900 2.800H.5z" fill="#fcefc0" stroke="#d8a43c" stroke-width="0.400"/></svg>
<span class="t" id="t44" style="left:501px;top:171.0px;font-size:7.2px;line-height:11.2px;color:#111;letter-spacing:-0.13px;">Container</span>
<svg style="left:627.6px;top:174.6px" width="4.6" height="3" viewBox="0 0 4.6 3"><ellipse cx="2.3" cy="1.5" rx="2.2" ry="1.300" fill="#f4f4f4" stroke="#8f8f8f" stroke-width="0.55"/></svg>
<svg style="left:499.3px;top:183.7px" width="7.4" height="7.4" viewBox="0 0 7.4 7.4"><rect x=".6" y=".6" width="6.2" height="6.2" rx="1.2" fill="#fff" stroke="#333" stroke-width="0.7" stroke-dasharray="1.3 .9"/></svg>
<span class="t" id="t45" style="left:508.2px;top:181.9px;font-size:7px;line-height:11px;color:#111;letter-spacing:-0.20px;">EventSubProcess</span>
<div style="left:491.8px;top:193.6px;width:143px;height:4.3px;overflow:hidden"><svg style="left:7.5px;top:.4px" width="7.4" height="7.4" viewBox="0 0 7.4 7.4"><rect x=".6" y=".8" width="6.2" height="5.8" rx="1" fill="#fff" stroke="#333" stroke-width="0.7"/><rect x="2.6" y="4" width="2.2" height="2.2" fill="none" stroke="#333" stroke-width="0.4"/></svg><span class="t" style="left:16.4px;top:-1.4px;font-size:7px;line-height:11px;color:#111">SubProcess</span></div>
<div class="bar" style="left:545px;top:194.2px;width:35.8px;height:3.3px;"></div>
<svg style="left:561.6px;top:195.0px" width="2.6" height="1.8" viewBox="0 0 2.6 1.8"><path d="M0 0h2.6L1.3 1.6z" fill="#000"/></svg>
<div class="drawer" style="left:491.6px;top:198.2px;width:143.4px;height:10px;"></div>
<svg style="left:492.8px;top:199.79999999999998px" width="7.4" height="6.4" viewBox="0 0 7.4 6.4"><path d="M.5 1.200h2.200l.7.800h3.200v3.800H.5z" fill="#f3d486" stroke="#d8a43c" stroke-width="0.500"/><path d="M1.500 3h5.700l-.900 2.800H.5z" fill="#fcefc0" stroke="#d8a43c" stroke-width="0.400"/></svg>
<span class="t" id="t46" style="left:501px;top:198.0px;font-size:7.2px;line-height:11.2px;color:#111;letter-spacing:0.00px;transform-origin:0 50%;transform:scaleX(0.930);">Gateway</span>
<svg style="left:627.6px;top:201.6px" width="4.6" height="3" viewBox="0 0 4.6 3"><ellipse cx="2.3" cy="1.5" rx="2.2" ry="1.300" fill="#f4f4f4" stroke="#8f8f8f" stroke-width="0.55"/></svg>
<svg style="left:499.3px;top:210.7px" width="7.4" height="7.4" viewBox="0 0 7.4 7.4"><path d="M3.7.3l3.4 3.4-3.4 3.4L.3 3.7z" fill="#fff" stroke="#333" stroke-width="0.6"/><path d="M3.7 1.8v3.8M1.8 3.7h3.8" stroke="#222" stroke-width="0.9"/><circle cx="3.7" cy="3.7" r="1" fill="#222"/></svg>
<span class="t" id="t47" style="left:508.2px;top:208.9px;font-size:7px;line-height:11px;color:#111;letter-spacing:0.00px;transform-origin:0 50%;transform:scaleX(0.922);">ParallelGateway</span>
<div style="left:491.8px;top:220.6px;width:143px;height:4.3px;overflow:hidden"><svg style="left:7.5px;top:.4px" width="7.4" height="7.4" viewBox="0 0 7.4 7.4"><path d="M3.7.3l3.4 3.4-3.4 3.4L.3 3.7z" fill="#fff" stroke="#333" stroke-width="0.6"/><path d="M2.6 2.4l2.2 2.6M4.8 2.4L2.6 5" stroke="#222" stroke-width="0.7"/></svg><span class="t" style="left:16.4px;top:-1.4px;font-size:7px;line-height:11px;color:#111">ExclusiveGateway</span></div>
<div class="bar" style="left:545px;top:221.2px;width:35.8px;height:3.3px;"></div>
<svg style="left:561.6px;top:222.0px" width="2.6" height="1.8" viewBox="0 0 2.6 1.8"><path d="M0 0h2.6L1.3 1.6z" fill="#000"/></svg>
<div class="drawer" style="left:491.6px;top:225.1px;width:143.4px;height:10px;"></div>
<svg style="left:492.8px;top:226.7px" width="7.4" height="6.4" viewBox="0 0 7.4 6.4"><path d="M.5 1.200h2.200l.7.800h3.200v3.800H.5z" fill="#f3d486" stroke="#d8a43c" stroke-width="0.500"/><path d="M1.500 3h5.700l-.900 2.800H.5z" fill="#fcefc0" stroke="#d8a43c" stroke-width="0.400"/></svg>
<span class="t" id="t48" style="left:501px;top:224.9px;font-size:7.2px;line-height:11.2px;color:#111;letter-spacing:-0.15px;">Boundary event</span>
<svg style="left:627.6px;top:228.5px" width="4.6" height="3" viewBox="0 0 4.6 3"><ellipse cx="2.3" cy="1.5" rx="2.2" ry="1.300" fill="#f4f4f4" stroke="#8f8f8f" stroke-width="0.55"/></svg>
<svg style="left:499.3px;top:237.6px" width="7.4" height="7.4" viewBox="0 0 7.4 7.4"><circle cx="3.7" cy="3.7" r="3.2" fill="#fff" stroke="#444" stroke-width="0.6"/><circle cx="3.7" cy="3.7" r="2.4" fill="#fff" stroke="#444" stroke-width="0.5"/><path d="M2.2 5.2l1-2.6 1 1.6 1-2-0.6 3-1-1.6z" fill="#444"/></svg>
<span class="t" id="t49" style="left:508.2px;top:235.8px;font-size:7px;line-height:11px;color:#111;letter-spacing:-0.10px;">InterruptingError</span>
<div style="left:491.8px;top:247.5px;width:143px;height:4.3px;overflow:hidden"><svg style="left:7.5px;top:.4px" width="7.4" height="7.4" viewBox="0 0 7.4 7.4"><circle cx="3.7" cy="3.7" r="3.2" fill="#fff" stroke="#444" stroke-width="0.6"/><circle cx="3.7" cy="3.7" r="2.2" fill="#fff" stroke="#444" stroke-width="0.5"/><path d="M3.7 2.2v1.5h1.2" stroke="#444" stroke-width="0.5" fill="none"/></svg><span class="t" style="left:16.4px;top:-1.4px;font-size:7px;line-height:11px;color:#111">InterruptingTimer</span></div>
<div class="bar" style="left:545px;top:248.1px;width:35.8px;height:3.3px;"></div>
<svg style="left:561.6px;top:248.9px" width="2.6" height="1.8" viewBox="0 0 2.6 1.8"><path d="M0 0h2.6L1.3 1.6z" fill="#000"/></svg>
<div class="drawer" style="left:491.6px;top:252.0px;width:143.4px;height:10px;"></div>
<svg style="left:492.8px;top:253.6px" width="7.4" height="6.4" viewBox="0 0 7.4 6.4"><path d="M.5 1.200h2.200l.7.800h3.200v3.800H.5z" fill="#f3d486" stroke="#d8a43c" stroke-width="0.500"/><path d="M1.500 3h5.700l-.900 2.800H.5z" fill="#fcefc0" stroke="#d8a43c" stroke-width="0.400"/></svg>
<span class="t" id="t50" style="left:501px;top:251.8px;font-size:7.2px;line-height:11.2px;color:#111;letter-spacing:-0.14px;">Intermediate event</span>
<svg style="left:627.6px;top:255.4px" width="4.6" height="3" viewBox="0 0 4.6 3"><ellipse cx="2.3" cy="1.5" rx="2.2" ry="1.300" fill="#f4f4f4" stroke="#8f8f8f" stroke-width="0.55"/></svg>
<svg style="left:499.3px;top:264.5px" width="7.4" height="7.4" viewBox="0 0 7.4 7.4"><circle cx="3.7" cy="3.7" r="3.2" fill="#fff" stroke="#555" stroke-width="0.6"/><circle cx="3.7" cy="3.7" r="2.4" fill="#fff" stroke="#555" stroke-width="0.5"/><path d="M3.7 2.2l1.6 2.6H2.1z" fill="none" stroke="#555" stroke-width="0.5"/></svg>
<span class="t" id="t51" style="left:508.2px;top:262.7px;font-size:7px;line-height:11px;color:#111;letter-spacing:0.00px;transform-origin:0 50%;transform:scaleX(0.939);">CatchingSignal</span>
<div style="left:491.8px;top:274.4px;width:143px;height:4.3px;overflow:hidden"><svg style="left:7.5px;top:.4px" width="7.4" height="7.4" viewBox="0 0 7.4 7.4"><circle cx="3.7" cy="3.7" r="3.2" fill="#fff" stroke="#555" stroke-width="0.6"/><circle cx="3.7" cy="3.7" r="2.4" fill="#fff" stroke="#555" stroke-width="0.5"/><rect x="2.2" y="2.8" width="3" height="2" fill="none" stroke="#555" stroke-width="0.4"/></svg><span class="t" style="left:16.4px;top:-1.4px;font-size:7px;line-height:11px;color:#111">CatchingMessage</span></div>
<div class="bar" style="left:545px;top:275.0px;width:35.8px;height:3.3px;"></div>
<svg style="left:561.6px;top:275.8px" width="2.6" height="1.8" viewBox="0 0 2.6 1.8"><path d="M0 0h2.6L1.3 1.6z" fill="#000"/></svg>
<div class="drawer" style="left:491.6px;top:278.3px;width:143.4px;height:9.1px;"></div>
<svg style="left:492.8px;top:279.90000000000003px" width="7.4" height="6.4" viewBox="0 0 7.4 6.4"><path d="M.5 1.200h2.200l.7.800h3.200v3.800H.5z" fill="#f3d486" stroke="#d8a43c" stroke-width="0.500"/><path d="M1.500 3h5.700l-.900 2.800H.5z" fill="#fcefc0" stroke="#d8a43c" stroke-width="0.400"/></svg>
<span class="t" id="t52" style="left:501px;top:278.1px;font-size:7.2px;line-height:11.2px;color:#111;letter-spacing:0.03px;">Artifacts</span>
<svg style="left:627.6px;top:281.7px" width="4.6" height="3" viewBox="0 0 4.6 3"><ellipse cx="2.3" cy="1.5" rx="2.2" ry="1.300" fill="#f4f4f4" stroke="#8f8f8f" stroke-width="0.55"/></svg>
<div class="panel" style="left:109.8px;top:290.4px;width:535px;height:105.8px;"></div>
<div style="left:109.8px;top:290.4px;width:535px;height:12.4px;background:linear-gradient(#e2eaf8,#d6e1f4);border-radius:3px 3px 0 0"></div>
<div style="left:110.4px;top:290.8px;width:53px;height:12.2px;background:#fff;border-radius:3px 4px 0 0;border-right:1px solid #bcc9e2"></div>
<svg style="left:0;top:290px" width="650" height="14" viewBox="0 290 650 14"><rect x="112.8" y="294.5" width="5" height="4.600" fill="#fff" stroke="#6a7a9a" stroke-width="0.7"/><path d="M112.8 296.100h5M114.800 294.500v4.600" stroke="#6a7a9a" stroke-width="0.5"/><rect x="112.800" y="294.300" width="5" height="1" fill="#5a78b8"/><path d="M156.3 294.4l4.4 4.4m0-4.4l-4.4 4.4" stroke="#6c7381" stroke-width="0.55"/><rect x="157.4" y="295.5" width="2.2" height="2.2" fill="#fff" stroke="#6c7381" stroke-width="0.45"/><rect x="167.200" y="293.600" width="4.600" height="6" fill="#f4f6fa" stroke="#6d8fc8" stroke-width="0.7"/><circle cx="169.500" cy="295.500" r="1.100" fill="#e04838"/><path d="M168.200 298.300h2.600" stroke="#e8b030" stroke-width="0.9"/><path d="M199 294v5.200M196.800 295.200l4.400 2.800M201.200 295.200l-4.400 2.800" stroke="#555" stroke-width="0.6"/><circle cx="199" cy="296.600" r="1.100" fill="#444"/><rect x="220.200" y="293.800" width="5.400" height="5.600" rx="1" fill="#fff" stroke="#d84a3a" stroke-width="0.7"/><circle cx="222.200" cy="295.800" r="1.600" fill="#e2453c"/><path d="M223.800 297.600l1.600 1.600" stroke="#6d8fc8" stroke-width="0.8"/><rect x="598" y="295.200" width="6" height="5" fill="#fdfdfd" stroke="#7f8aa3" stroke-width="0.7"/><rect x="598" y="295" width="6" height="1.300" fill="#7a9ad4"/><path d="M602.400 296.400l2.600-2.400" stroke="#2c9a3a" stroke-width="1"/><circle cx="605" cy="294.200" r="1.200" fill="#2c9a3a"/><path d="M613.4 294.3h4.6l-2.3 2.7z" fill="#fff" stroke="#666d7c" stroke-width="0.6"/><rect x="622.8" y="294.4" width="5" height="1.7" rx="0.7" fill="#fff" stroke="#666d7c" stroke-width="0.6"/><rect x="633.4" y="294.6" width="4.8" height="4.6" rx="0.6" fill="#fff" stroke="#555c6a" stroke-width="0.7"/><rect x="633.4" y="294.40000000000003" width="4.8" height="1.3" fill="#555c6a"/></svg>
<span class="t" id="t53" style="left:119.6px;top:291.3px;font-size:6.8px;line-height:10.8px;color:#111;letter-spacing:0.00px;transform-origin:0 50%;transform:scaleX(0.862);">プロパティー</span>
<span class="t" id="t54" style="left:176.2px;top:291.3px;font-size:6.8px;line-height:10.8px;color:#111;letter-spacing:0.20px;">問題</span>
<span class="t" id="t55" style="left:204.2px;top:291.3px;font-size:6.8px;line-height:10.8px;color:#111;letter-spacing:-0.03px;">Ant</span>
<span class="t" id="t56" style="left:227.2px;top:291.3px;font-size:6.8px;line-height:10.8px;color:#111;letter-spacing:0.00px;transform-origin:0 50%;transform:scaleX(0.873);">エラー・ログ</span>
<div style="left:111.6px;top:303.6px;width:60.2px;height:92.2px;background:linear-gradient(to right,#d9d6ce,#cfccc3);border-right:1px solid #bbb8af"></div>
<div style="left:111.6px;top:308.6px;width:60.2px;height:10.3px;background:linear-gradient(#dddbd3,#c7c4b9);border-top:1px solid #ebe9e4;border-bottom:1px solid #a9a69c"></div>
<div style="left:111.6px;top:329.4px;width:60.2px;height:10.3px;background:linear-gradient(#dddbd3,#c7c4b9);border-top:1px solid #ebe9e4;border-bottom:1px solid #a9a69c"></div>
<div style="left:111.6px;top:339.7px;width:60.2px;height:10.3px;background:linear-gradient(#dddbd3,#c7c4b9);border-top:1px solid #ebe9e4;border-bottom:1px solid #a9a69c"></div>
<div style="left:111.6px;top:307.8px;width:60.2px;height:0.8px;background:#b3b0a6"></div>
<div style="left:111.6px;top:319px;width:61px;height:10.4px;background:#fff"></div>
<span class="t" id="t57" style="left:114.8px;top:308.2px;font-size:6.8px;line-height:10.8px;color:#222;letter-spacing:0.00px;transform-origin:0 50%;transform:scaleX(0.926);">General</span>
<span class="t" id="t58" style="left:114.8px;top:318.7px;font-size:6.8px;line-height:10.8px;color:#000;font-weight:bold;letter-spacing:0.18px;">Main config</span>
<span class="t" id="t59" style="left:114.8px;top:329.3px;font-size:6.8px;line-height:10.8px;color:#222;letter-spacing:-0.04px;">Documentation</span>
<span class="t" id="t60" style="left:114.8px;top:339.5px;font-size:6.8px;line-height:10.8px;color:#222;letter-spacing:-0.05px;">Multi instance</span>
<div style="left:170.8px;top:306.2px;width:52.2px;height:12.3px;background:#fff;border:2px solid #ee1216;border-radius:3.2px"></div>
<span class="t" id="t61" style="left:176.8px;top:307.0px;font-size:6.8px;line-height:10.8px;color:#222;letter-spacing:0.04px;">Operation ref</span>
<div style="left:268.6px;top:306.6px;width:372.6px;height:9.2px;background:#fff;border:1px solid #cdd0d6;border-radius:1px"></div>
<span class="t" id="t62" style="left:269.8px;top:306.3px;font-size:6.4px;line-height:10.4px;color:#222;letter-spacing:0.00px;transform-origin:0 50%;transform:scaleX(0.914);">ope1</span>
<div style="left:283.4px;top:308px;width:0.7px;height:6.8px;background:#222"></div>
<svg style="left:512px;top:400.6px" width="2" height="8" viewBox="0 0 2 8"><path d="M1 0v8" stroke="#b3bbd2" stroke-width="1" stroke-dasharray="1 1"/></svg>
</div>
</body>
</html>
